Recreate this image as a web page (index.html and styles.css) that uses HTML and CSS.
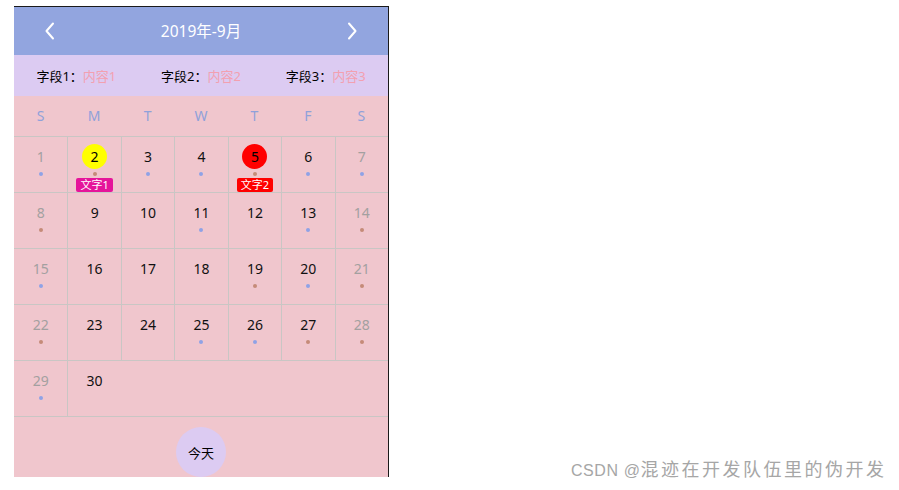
FILE: index.html
```html
<!DOCTYPE html>
<html lang="zh-CN">
<head>
<meta charset="utf-8">
<title>Calendar</title>
<link rel="stylesheet" href="styles.css">
</head>
<body>
<div class="app">
  <div class="header">
    <span class="arrow"><svg width="12" height="18" viewBox="0 0 12 18"><polyline points="9,1.5 2.5,9 9,16.5" fill="none" stroke="#fff" stroke-width="2" stroke-linecap="round" stroke-linejoin="round"/></svg></span>
    <span class="title">2019年-9月</span>
    <span class="arrow"><svg width="12" height="18" viewBox="0 0 12 18"><polyline points="3,1.5 9.5,9 3,16.5" fill="none" stroke="#fff" stroke-width="2" stroke-linecap="round" stroke-linejoin="round"/></svg></span>
  </div>
  <div class="fields">
    <div class="field">字段1：<span class="val">内容1</span></div>
    <div class="field">字段2：<span class="val">内容2</span></div>
    <div class="field">字段3：<span class="val">内容3</span></div>
  </div>
  <div class="weekdays">
    <span>S</span><span>M</span><span>T</span><span>W</span><span>T</span><span>F</span><span>S</span>
  </div>
  <div class="grid">
    <div class="row">
      <div class="cell weekend"><span class="num">1</span><i class="dot blue"></i></div>
      <div class="cell"><span class="num circle yellow">2</span><i class="dot brown"></i><span class="tag magenta">文字1</span></div>
      <div class="cell"><span class="num">3</span><i class="dot blue"></i></div>
      <div class="cell"><span class="num">4</span><i class="dot blue"></i></div>
      <div class="cell"><span class="num circle red">5</span><i class="dot brown"></i><span class="tag redtag">文字2</span></div>
      <div class="cell"><span class="num">6</span><i class="dot blue"></i></div>
      <div class="cell weekend"><span class="num">7</span><i class="dot blue"></i></div>
    </div>
    <div class="row">
      <div class="cell weekend"><span class="num">8</span><i class="dot brown"></i></div>
      <div class="cell"><span class="num">9</span></div>
      <div class="cell"><span class="num">10</span></div>
      <div class="cell"><span class="num">11</span><i class="dot blue"></i></div>
      <div class="cell"><span class="num">12</span></div>
      <div class="cell"><span class="num">13</span><i class="dot blue"></i></div>
      <div class="cell weekend"><span class="num">14</span><i class="dot brown"></i></div>
    </div>
    <div class="row">
      <div class="cell weekend"><span class="num">15</span><i class="dot blue"></i></div>
      <div class="cell"><span class="num">16</span></div>
      <div class="cell"><span class="num">17</span></div>
      <div class="cell"><span class="num">18</span></div>
      <div class="cell"><span class="num">19</span><i class="dot brown"></i></div>
      <div class="cell"><span class="num">20</span><i class="dot blue"></i></div>
      <div class="cell weekend"><span class="num">21</span><i class="dot brown"></i></div>
    </div>
    <div class="row">
      <div class="cell weekend"><span class="num">22</span><i class="dot brown"></i></div>
      <div class="cell"><span class="num">23</span></div>
      <div class="cell"><span class="num">24</span></div>
      <div class="cell"><span class="num">25</span><i class="dot blue"></i></div>
      <div class="cell"><span class="num">26</span><i class="dot blue"></i></div>
      <div class="cell"><span class="num">27</span><i class="dot brown"></i></div>
      <div class="cell weekend"><span class="num">28</span><i class="dot brown"></i></div>
    </div>
    <div class="row">
      <div class="cell weekend"><span class="num">29</span><i class="dot blue"></i></div>
      <div class="cell"><span class="num">30</span></div>
    </div>
  </div>
  <div class="today-bar">
    <div class="today">今天</div>
  </div>
</div>
<div class="watermark"><span class="wm-latin">CSDN @</span><span class="wm-cjk">混迹在开发队伍里的伪开发</span></div>
</body>
</html>
```

FILE: styles.css
```css
html, body {
  margin: 0;
  padding: 0;
  background: #fff;
}
body {
  font-family: "Noto Sans", "Noto Sans CJK SC", sans-serif;
  width: 899px;
  height: 490px;
  overflow: hidden;
  position: relative;
}
.app {
  margin: 6px 0 0 14px;
  width: 374px;
  height: 470px;
  border-top: 1px solid #1a1a1a;
  border-right: 1px solid #1a1a1a;
  background: #f0c6cd;
  overflow: hidden;
}
.header {
  height: 48px;
  background: #92a5df;
  display: flex;
  align-items: center;
  justify-content: space-between;
  padding: 0 30px;
  color: #fff;
}
.arrow {
  display: flex;
  width: 12px;
  height: 18px;
}
.title {
  font-size: 15.5px;
  position: relative;
  top: -1px;
}
.fields {
  height: 41px;
  background: #dccbf2;
  display: flex;
  justify-content: space-around;
  align-items: center;
  font-size: 13px;
  color: #000;
}
.val {
  color: #f3a0b0;
}
.weekdays {
  height: 40px;
  display: grid;
  grid-template-columns: repeat(7, 1fr);
  align-items: center;
  text-align: center;
  font-size: 14px;
  color: #8fa1da;
}
.weekdays span {
  position: relative;
  top: -1px;
}
.grid {
  border-top: 1px solid #c9c6c4;
}
.row {
  display: grid;
  grid-template-columns: repeat(7, 1fr);
  height: 55px;
  border-bottom: 1px solid #c9c6c4;
}
.cell {
  display: flex;
  flex-direction: column;
  align-items: center;
  border-left: 1px solid #c9c6c4;
  color: #111;
}
.cell:first-child {
  border-left: none;
}
.cell.weekend {
  color: #a3a0a0;
}
.num {
  font-size: 14px;
  line-height: 20px;
  margin-top: 10px;
}
.num.circle {
  width: 25px;
  height: 25px;
  line-height: 25px;
  border-radius: 50%;
  text-align: center;
  margin-top: 7px;
  color: #000;
}
.yellow { background: #ffff00; }
.red { background: #ff0000; }
.dot {
  display: block;
  width: 4px;
  height: 4px;
  border-radius: 50%;
  margin-top: 5px;
}
.num.circle + .dot {
  margin-top: 3px;
}
.blue { background: #8fa2e6; }
.brown { background: #c58b78; }
.tag {
  margin-top: 2px;
  font-size: 11px;
  line-height: 14px;
  height: 14px;
  padding: 0 4px;
  border-radius: 2px;
  color: #fff;
}
.magenta { background: #e5149a; }
.redtag { background: #ff0000; }
.today-bar {
  height: 60px;
  display: flex;
  justify-content: center;
  padding-top: 10px;
}
.today {
  width: 50px;
  height: 50px;
  border-radius: 50%;
  background: #dccbf2;
  display: flex;
  align-items: center;
  justify-content: center;
  font-size: 13px;
  color: #000;
}
.watermark {
  position: absolute;
  right: 15px;
  top: 458px;
  color: #a6a6a6;
  font-family: "Liberation Sans", "Noto Sans CJK SC", sans-serif;
  display: flex;
  align-items: baseline;
  line-height: 24px;
}
.wm-latin {
  font-size: 16px;
  letter-spacing: 0.6px;
}
.wm-cjk {
  font-size: 18px;
  letter-spacing: 2.5px;
  margin-right: -2.5px;
}
```
